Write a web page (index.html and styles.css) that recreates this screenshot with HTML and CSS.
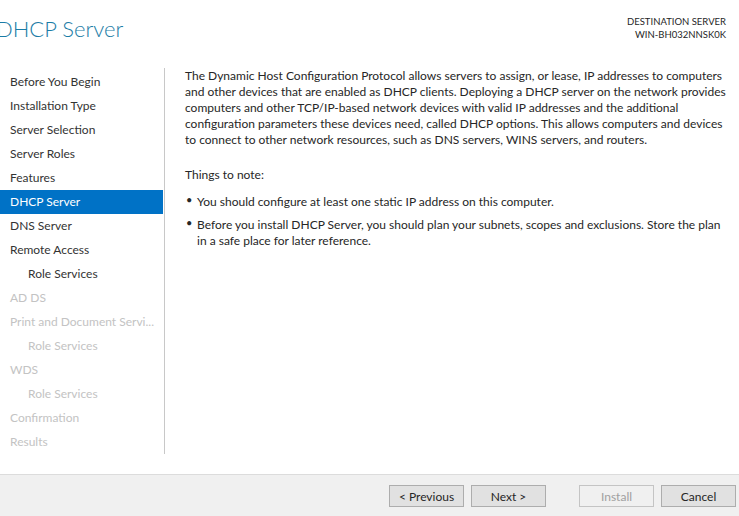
FILE: index.html
```html
<!DOCTYPE html>
<html>
<head>
<meta charset="utf-8">
<link rel="stylesheet" href="styles.css">
</head>
<body>
<div class="window">
  <div class="header">
    <div class="title">DHCP Server</div>
    <div class="dest">
      <div>DESTINATION SERVER</div>
      <div>WIN-BH032NNSK0K</div>
    </div>
  </div>
  <div class="main">
    <div class="sidebar">
      <div class="item">Before You Begin</div>
      <div class="item">Installation Type</div>
      <div class="item">Server Selection</div>
      <div class="item">Server Roles</div>
      <div class="item">Features</div>
      <div class="item active">DHCP Server</div>
      <div class="item">DNS Server</div>
      <div class="item">Remote Access</div>
      <div class="item sub">Role Services</div>
      <div class="item off">AD DS</div>
      <div class="item off">Print and Document Servi...</div>
      <div class="item sub off">Role Services</div>
      <div class="item off">WDS</div>
      <div class="item sub off">Role Services</div>
      <div class="item off">Confirmation</div>
      <div class="item off">Results</div>
    </div>
    <div class="content">
      <p class="para">The Dynamic Host Configuration Protocol allows servers to assign, or lease, IP addresses to computers<br>and other devices that are enabled as DHCP clients. Deploying a DHCP server on the network provides<br>computers and other TCP/IP-based network devices with valid IP addresses and the additional<br>configuration parameters these devices need, called DHCP options. This allows computers and devices<br>to connect to other network resources, such as DNS servers, WINS servers, and routers.</p>
      <p class="note">Things to note:</p>
      <ul class="bullets">
        <li>You should configure at least one static IP address on this computer.</li>
        <li>Before you install DHCP Server, you should plan your subnets, scopes and exclusions. Store the plan<br>in a safe place for later reference.</li>
      </ul>
    </div>
  </div>
  <div class="footer">
    <button class="btn">&lt; Previous</button>
    <button class="btn">Next &gt;</button>
    <button class="btn disabled gap">Install</button>
    <button class="btn">Cancel</button>
  </div>
</div>
</body>
</html>
```
FILE: styles.css
```css
html, body {
  margin: 0;
  padding: 0;
  background: #ffffff;
}
.window {
  width: 739px;
  height: 516px;
  overflow: hidden;
  position: relative;
  font-family: "Segoe UI", "Lato", "Noto Sans", sans-serif;
  font-size: 12px;
  color: #262626;
  display: flex;
  flex-direction: column;
}
.header {
  height: 68px;
  display: flex;
  justify-content: space-between;
  align-items: flex-start;
  flex: none;
}
.title {
  margin-left: -4px;
  margin-top: 14px;
  font-size: 22px;
  font-weight: 300;
  color: #1a7ca6;
  line-height: 30px;
  white-space: nowrap;
}
.dest {
  margin-top: 15px;
  margin-right: 13px;
  text-align: right;
  font-size: 9.5px;
  line-height: 13px;
  color: #262626;
}
.main {
  flex: none;
  height: 406px;
  display: flex;
}
.sidebar {
  width: 164px;
  height: 384px;
  border-right: 1px solid #c8c8c8;
  padding-top: 2px;
  flex: none;
}
.item {
  height: 24px;
  line-height: 24px;
  padding-left: 10px;
  margin-right: 1px;
  color: #333333;
  white-space: nowrap;
  overflow: hidden;
}
.item.sub {
  padding-left: 28px;
}
.item.off {
  color: #c3c3c3;
}
.item.active {
  background: #0072c6;
  color: #ffffff;
}
.content {
  padding-left: 20px;
  padding-top: 0;
  line-height: 16px;
  white-space: nowrap;
}
.para {
  margin: 0;
}
.note {
  margin: 19px 0 0 0;
}
.bullets {
  list-style: none;
  margin: 11px 0 0 0;
  padding: 0;
}
.bullets li {
  position: relative;
  padding-left: 12px;
  margin-bottom: 7px;
}
.bullets li::before {
  content: "\2022";
  position: absolute;
  left: 1px;
  top: -2px;
  font-size: 11px;
}
.footer {
  flex: none;
  height: 42px;
  border-top: 1px solid #dcdcdc;
  background: #f0f0f0;
  display: flex;
  justify-content: flex-end;
  align-items: flex-start;
  padding-top: 10px;
  padding-right: 3px;
  box-sizing: border-box;
  gap: 7px;
}
.btn {
  width: 75px;
  height: 22px;
  margin: 0;
  padding: 0;
  border: 1px solid #adadad;
  background: #e1e1e1;
  font-family: "Segoe UI", "Lato", "Noto Sans", sans-serif;
  font-size: 12px;
  color: #262626;
}
.btn.disabled {
  border-color: #c4c4c4;
  background: #f0f0f0;
  color: #a0a0a0;
}
.btn.gap {
  margin-left: 26px;
}
```
